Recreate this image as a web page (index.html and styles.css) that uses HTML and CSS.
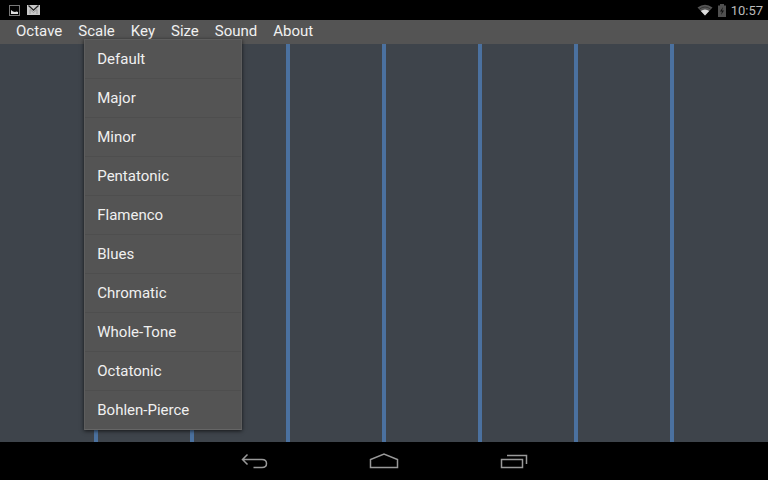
FILE: index.html
```html
<!DOCTYPE html>
<html lang="en">
  <head>
    <meta charset="UTF-8" />
    <meta name="viewport" content="width=device-width, initial-scale=1.0" />
    <title>Scale</title>
    <link rel="stylesheet" href="styles.css">
  </head>
  <body>
    <header class="status-bar">
      <div class="status-group">
        <svg width="11" height="11" viewBox="0 0 11 11">
          <rect x="0.5" y="0.5" width="10" height="10" fill="none" stroke="#777" />
          <path d="M2 9V5l2 1.500 2 .500 1.500-.500L9 7v2z" fill="#ddd" />
        </svg>
        <svg width="13" height="10" viewBox="0 0 13 10">
          <rect width="13" height="10" fill="#c8c8c8" />
          <path d="M1.500 0.500L6.500 5.200 11.500 0.500" fill="none" stroke="#222" stroke-width="1.300" />
          <path d="M3 9V4.500l3.500 3 3.500-3V9" fill="none" stroke="#888" stroke-width="0.700" />
        </svg>
      </div>
      <div class="status-group">
        <svg width="16" height="12" viewBox="0 0 16 12">
          <path d="M0.500 3.500Q8-2 15.500 3.500L8 11.500z" fill="#555" />
          <path d="M2.500 5Q8 1 13.500 5" fill="none" stroke="#222" stroke-width="0.700" />
          <path d="M3.800 7Q8 4 12.200 7L8 11.500z" fill="#ddd" />
        </svg>
        <svg width="8" height="13" viewBox="0 0 8 13">
          <path d="M0 1.500h2V0h4v1.500h2V13H0z" fill="#505050" />
          <path d="M5 3L2 7.500h2L3 11l3-4.500H4z" fill="#111" />
        </svg>
        <time class="clock">10:57</time>
      </div>
    </header>

    <nav class="menu-bar">
      <button type="button">Octave</button>
      <div class="menu-item">
        <button type="button" aria-expanded="true">Scale</button>
        <div class="dropdown">
          <button type="button">Default</button>
          <button type="button">Major</button>
          <button type="button">Minor</button>
          <button type="button">Pentatonic</button>
          <button type="button">Flamenco</button>
          <button type="button">Blues</button>
          <button type="button">Chromatic</button>
          <button type="button">Whole-Tone</button>
          <button type="button">Octatonic</button>
          <button type="button">Bohlen-Pierce</button>
        </div>
      </div>
      <button type="button">Key</button>
      <button type="button">Size</button>
      <button type="button">Sound</button>
      <button type="button">About</button>
    </nav>

    <main class="strings">
      <div class="fret"></div>
      <div class="fret"></div>
      <div class="fret"></div>
      <div class="fret"></div>
      <div class="fret"></div>
      <div class="fret"></div>
      <div class="fret"></div>
      <div class="fret"></div>
    </main>

    <footer class="nav-bar">
      <button type="button" aria-label="Back">
        <svg width="30" height="18" viewBox="0 0 30 18">
          <path d="M8.500 2.500L3.500 7.500l5 5M3.500 7.500H23q4.500 0 4.500 4t-4.500 4H14.500" />
        </svg>
      </button>
      <button type="button" aria-label="Home">
        <svg width="30" height="18" viewBox="0 0 30 18">
          <path d="M1.500 15.500V7.500L15 2l13.500 5.500v8z" />
        </svg>
      </button>
      <button type="button" aria-label="Recent apps">
        <svg width="30" height="18" viewBox="0 0 30 18">
          <path d="M2.500 7.500h21v8h-21zM8 3.500h19.500V12" />
        </svg>
      </button>
    </footer>
  </body>
</html>
```

FILE: styles.css
```css
body {
  font-family: Roboto, "Liberation Sans", sans-serif;
  background-color: #000;
  color: #f0f0f0;
  margin: 0;
  min-height: 100vh;
  display: flex;
  flex-direction: column;
}
button {
  background: none;
  border: none;
  padding: 0;
  color: inherit;
  font: inherit;
  cursor: pointer;
}
svg {
  display: block;
}
.status-bar {
  display: flex;
  justify-content: space-between;
  height: 20px;
  padding: 0 5px 0 9px;
}
.status-group {
  display: flex;
  align-items: center;
  gap: 5px;
}
.status-group:first-child {
  gap: 7px;
}
.clock {
  color: #bbb;
  font-size: 13px;
  line-height: 18px;
  padding-top: 2px;
}
.menu-bar {
  display: flex;
  gap: 16px;
  height: 24px;
  padding: 0 16px;
  background-color: #545454;
  font-size: 15px;
  line-height: 22px;
  align-items: flex-start;
}
.menu-item {
  position: relative;
}
.dropdown {
  position: absolute;
  top: 19px;
  left: 6px;
  width: 156px;
  display: flex;
  flex-direction: column;
  background-color: #545454;
  border: 1px solid #5e5e5e;
  border-bottom-color: #666;
  box-shadow: 0 1px 4px rgba(0, 0, 0, 0.7);
}
.dropdown button {
  height: 39px;
  padding: 0 12px;
  text-align: left;
  border-bottom: 1px solid #4e4e4e;
}
.dropdown button:last-child {
  height: 38px;
  border-bottom: none;
}
.strings {
  flex: 1;
  display: grid;
  grid-template-columns: repeat(8, 1fr);
  background-color: #3e444b;
}
.fret {
  border: 0 solid #4b719f;
  border-right-width: 2px;
  border-left-width: 2px;
}
.fret:first-child {
  border-left: none;
}
.fret:last-child {
  border-right: none;
}
.nav-bar {
  display: flex;
  justify-content: center;
  align-items: center;
  gap: 100px;
  height: 38px;
}
.nav-bar path {
  fill: none;
  stroke: #999;
  stroke-width: 1.5;
}
```
